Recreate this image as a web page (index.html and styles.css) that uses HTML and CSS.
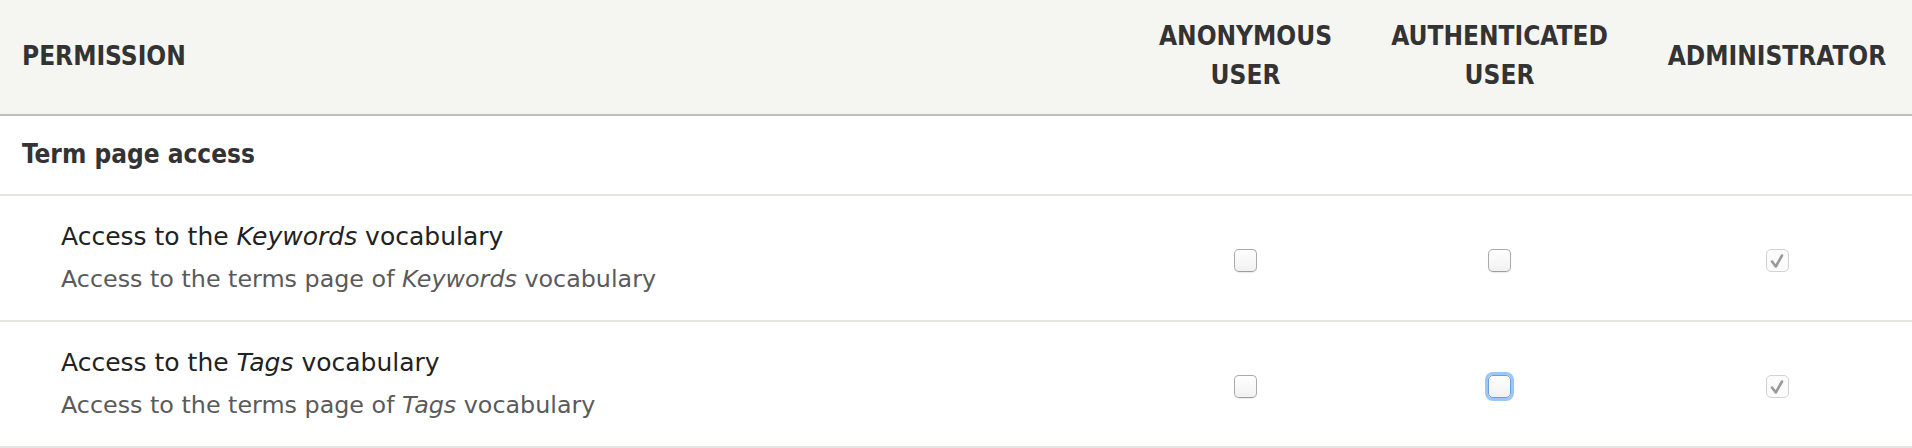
FILE: index.html
```html
<!DOCTYPE html>
<html lang="en">
<head>
  <meta charset="UTF-8" />
  <title>Permissions</title>
  <link rel="stylesheet" href="styles.css">
</head>
<body>
  <table class="permissions">
    <colgroup>
      <col>
      <col class="col-anon">
      <col class="col-auth">
      <col class="col-admin">
    </colgroup>
    <thead>
      <tr>
        <th class="perm-head">Permission</th>
        <th class="role">Anonymous user</th>
        <th class="role">Authenticated user</th>
        <th class="role">Administrator</th>
      </tr>
    </thead>
    <tbody>
      <tr class="module">
        <td colspan="4">Term page access</td>
      </tr>
      <tr>
        <td class="permission">
          <div class="title">Access to the <em>Keywords</em> vocabulary</div>
          <div class="description">Access to the terms page of <em>Keywords</em> vocabulary</div>
        </td>
        <td class="checkbox"><span class="box"></span></td>
        <td class="checkbox"><span class="box"></span></td>
        <td class="checkbox">
          <span class="box checked">
            <svg width="21" height="21" viewBox="0 0 21 21"><path d="M5 11.5 L8.8 16.5 L15 5.5" fill="none" stroke="#9a9a9a" stroke-width="2.6" stroke-linecap="round" stroke-linejoin="round"/></svg>
          </span>
        </td>
      </tr>
      <tr>
        <td class="permission">
          <div class="title">Access to the <em>Tags</em> vocabulary</div>
          <div class="description">Access to the terms page of <em>Tags</em> vocabulary</div>
        </td>
        <td class="checkbox"><span class="box"></span></td>
        <td class="checkbox"><span class="box focus"></span></td>
        <td class="checkbox">
          <span class="box checked">
            <svg width="21" height="21" viewBox="0 0 21 21"><path d="M5 11.5 L8.8 16.5 L15 5.5" fill="none" stroke="#9a9a9a" stroke-width="2.6" stroke-linecap="round" stroke-linejoin="round"/></svg>
          </span>
        </td>
      </tr>
    </tbody>
  </table>
</body>
</html>
```

FILE: styles.css
```css
body {
  margin: 0;
  background: #fff;
  font-family: 'DejaVu Sans', sans-serif;
  color: #222;
}
.permissions {
  width: 100%;
  table-layout: fixed;
  border-collapse: separate;
  border-spacing: 0;
}
.col-anon {
  width: 223px;
}
.col-auth {
  width: 285px;
}
.col-admin {
  width: 270px;
}
th {
  background: #f5f5f2;
  border-bottom: 2px solid #bfbfb9;
  color: #333;
  font-family: 'DejaVu Sans Condensed', 'DejaVu Sans', sans-serif;
  font-stretch: condensed;
  font-weight: bold;
  font-size: 26px;
  line-height: 39px;
  text-transform: uppercase;
  padding: 17px 22px 19px;
  vertical-align: middle;
}
.perm-head {
  text-align: left;
}
.role {
  text-align: center;
}
td {
  border-bottom: 2px solid #e6e4df;
  padding: 0 22px;
}
.module td {
  color: #333;
  font-family: 'DejaVu Sans Condensed', 'DejaVu Sans', sans-serif;
  font-stretch: condensed;
  font-weight: bold;
  font-size: 26px;
  line-height: 39px;
  padding: 19px 22px 20px;
}
.permission {
  line-height: 43px;
  padding: 19px 22px 19px 61px;
}
.title {
  color: #222;
  font-size: 25px;
}
.description {
  color: #5a5a5a;
  font-size: 23.8px;
}
.checkbox {
  text-align: center;
  vertical-align: middle;
  padding-top: 4px;
}
.box {
  display: inline-block;
  box-sizing: border-box;
  width: 23px;
  height: 23px;
  border: 1px solid #aaa;
  border-bottom-color: #9e9e9e;
  border-radius: 5px;
  background: linear-gradient(#fff, #f1f1f1);
  box-shadow: 0 1px 1px rgba(0, 0, 0, 0.08);
  vertical-align: middle;
}
.box svg {
  display: block;
}
.checked {
  border-color: #d2d2d2;
  background: #fbfbfb;
  box-shadow: none;
}
.focus {
  border-color: #6b9fdc;
  box-shadow: 0 0 0 3px #9bc7f5;
}
```
